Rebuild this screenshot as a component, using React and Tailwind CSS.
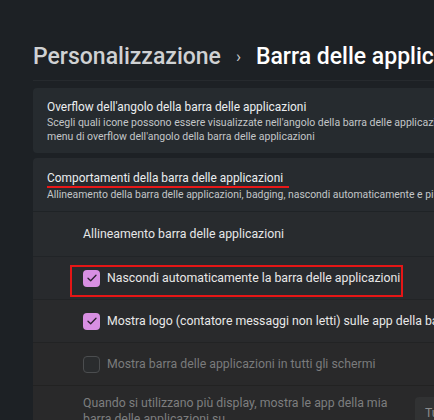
import React from "react";

const font = { fontFamily: 'Roboto, "Noto Sans", sans-serif' };

function Check({ checked }) {
  if (checked) {
    return (
      <div className="w-[17px] h-[17px] rounded-[4px] bg-[#d88fe3] flex items-center justify-center shrink-0">
        <svg width="10" height="8" viewBox="0 0 10 8" fill="none">
          <path d="M1 4.2 L3.7 6.8 L9 1.3" stroke="#2a1f2e" strokeWidth="1.3" strokeLinecap="round" strokeLinejoin="round" />
        </svg>
      </div>
    );
  }
  return <div className="w-[17px] h-[17px] rounded-[4px] border border-[#4b4d4f] bg-[#2a2c2e] shrink-0" />;
}

export default function App() {
  return (
    <div className="w-[434px] h-[420px] overflow-hidden bg-[#1d2125] relative flex items-start" style={font}>
      <div className="w-[33px] shrink-0" />
      <div className="w-[760px] shrink-0">
        <div className="h-[81px] flex items-center pt-[34px] border-b border-[#262a2e]">
          <span className="text-[23px] font-medium text-[#cfd1d3]">Personalizzazione</span>
          <span className="text-[17px] text-[#c8cacc] w-[35px] text-center">›</span>
          <span className="text-[23px] font-medium text-white">Barra delle applicazioni</span>
        </div>
        <div className="h-[7px]" />
        <div className="h-[65px] rounded-[4px] bg-[#262b2f] pl-[14px] flex flex-col justify-center">
          <div className="text-[11.9px] leading-[18px] text-[#eceeef]">Overflow dell'angolo della barra delle applicazioni</div>
          <div className="text-[10.5px] leading-[14px] text-[#c3c6c8] whitespace-nowrap">
            Scegli quali icone possono essere visualizzate nell'angolo della barra delle applicazioni. Tutte le altre icone verranno visualizzate nel
          </div>
          <div className="text-[10.5px] leading-[14px] text-[#c3c6c8]">menu di overflow dell'angolo della barra delle applicazioni</div>
        </div>
        <div className="h-[5px]" />
        <div className="rounded-t-[4px] bg-[#272b2f]">
          <div className="h-[54px] pl-[14px] flex flex-col justify-center pt-[3px] border-b border-[#1f2326]">
            <div className="text-[11.9px] leading-[17px] text-[#eceeef]">Comportamenti della barra delle applicazioni</div>
            <div className="text-[10.4px] leading-[15px] text-[#c3c6c8] whitespace-nowrap">
              Allineamento della barra delle applicazioni, badging, nascondi automaticamente e più schermi
            </div>
          </div>
          <div className="h-[45px] pl-[50px] flex items-center border-b border-[#212427] bg-[#282b2e]">
            <span className="text-[12.3px] text-[#e6e7e8]">Allineamento barra delle applicazioni</span>
          </div>
          <div className="h-[43px] pl-[50px] flex items-center gap-[7px] border-b border-[#222426] bg-[#282a2d]">
            <Check checked />
            <span className="text-[12.3px] text-[#e8e8e8]">Nascondi automaticamente la barra delle applicazioni</span>
          </div>
          <div className="h-[43px] pl-[50px] flex items-center gap-[7px] border-b border-[#222324] bg-[#292a2c]">
            <Check checked />
            <span className="text-[12.3px] text-[#e8e8e8] whitespace-nowrap">Mostra logo (contatore messaggi non letti) sulle app della barra delle applicazioni</span>
          </div>
          <div className="h-[43px] pl-[50px] flex items-center gap-[7px] border-b border-[#222222] bg-[#29292a]">
            <Check />
            <span className="text-[12.3px] text-[#7a7b7c]">Mostra barra delle applicazioni in tutti gli schermi</span>
          </div>
          <div className="h-[60px] pl-[50px] flex items-start bg-[#29292a]">
            <div className="w-[320px] pt-[9px] text-[12.3px] leading-[16px] text-[#7d7e7f] shrink-0">
              Quando si utilizzano più display, mostra le app della mia barra delle applicazioni su
            </div>
            <div className="ml-[12px] mt-[11px] h-[32px] px-[10px] rounded-[4px] bg-[#313233] flex items-center text-[12.3px] text-[#8a8b8c] whitespace-nowrap">
              Tutte le barre delle applicazioni
            </div>
          </div>
        </div>
      </div>
      <div className="absolute left-[47px] top-[186px] w-[242px] h-[2px] bg-[#e81818]" />
      <div className="absolute left-[70px] top-[265px] w-[333px] h-[32px] border-2 border-[#e51616]" />
    </div>
  );
}
